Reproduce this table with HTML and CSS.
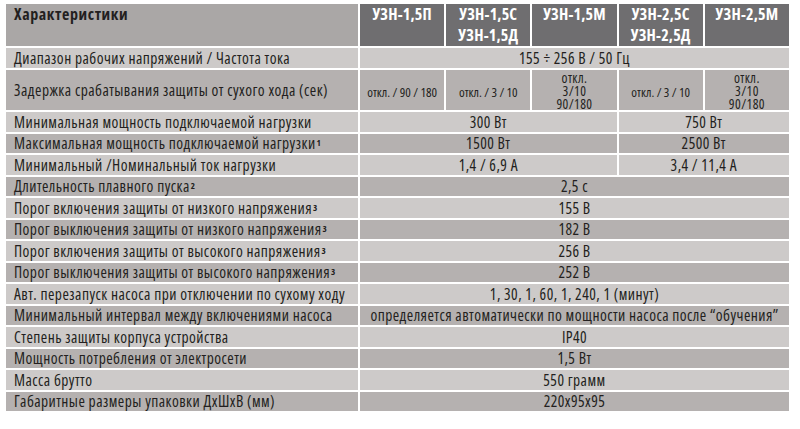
FILE: index.html
```html
<!DOCTYPE html>
<html lang="ru">
<head>
<meta charset="utf-8">
<title>Характеристики</title>
<link rel="stylesheet" href="styles.css">
</head>
<body>
<div class="spec">
  <div class="row">
    <div class="cell head-title">Характеристики</div>
    <div class="cell head">УЗН-1,5П</div>
    <div class="cell head">УЗН-1,5С<br>УЗН-1,5Д</div>
    <div class="cell head">УЗН-1,5М</div>
    <div class="cell head">УЗН-2,5С<br>УЗН-2,5Д</div>
    <div class="cell head">УЗН-2,5М</div>
  </div>
  <div class="row light">
    <div class="cell label">Диапазон рабочих напряжений / Частота тока</div>
    <div class="cell val all">155 ÷ 256 В / 50 Гц</div>
  </div>
  <div class="row dark tall">
    <div class="cell label">Задержка срабатывания защиты от сухого хода (сек)</div>
    <div class="cell val small">откл. / 90 / 180</div>
    <div class="cell val small">откл. / 3 / 10</div>
    <div class="cell val stack">откл.<br>3/10<br>90/180</div>
    <div class="cell val small">откл. / 3 / 10</div>
    <div class="cell val stack">откл.<br>3/10<br>90/180</div>
  </div>
  <div class="row light">
    <div class="cell label">Минимальная мощность подключаемой нагрузки</div>
    <div class="cell val three">300 Вт</div>
    <div class="cell val two">750 Вт</div>
  </div>
  <div class="row dark">
    <div class="cell label">Максимальная мощность подключаемой нагрузки<sup>1</sup></div>
    <div class="cell val three">1500 Вт</div>
    <div class="cell val two">2500 Вт</div>
  </div>
  <div class="row light">
    <div class="cell label">Минимальный /Номинальный ток нагрузки</div>
    <div class="cell val three">1,4 / 6,9 А</div>
    <div class="cell val two">3,4 / 11,4 А</div>
  </div>
  <div class="row dark">
    <div class="cell label">Длительность плавного пуска<sup>2</sup></div>
    <div class="cell val all">2,5 с</div>
  </div>
  <div class="row light">
    <div class="cell label">Порог включения защиты от низкого напряжения<sup>3</sup></div>
    <div class="cell val all">155 В</div>
  </div>
  <div class="row dark">
    <div class="cell label">Порог выключения защиты от низкого напряжения<sup>3</sup></div>
    <div class="cell val all">182 В</div>
  </div>
  <div class="row light">
    <div class="cell label">Порог включения защиты от высокого напряжения<sup>3</sup></div>
    <div class="cell val all">256 В</div>
  </div>
  <div class="row dark">
    <div class="cell label">Порог выключения защиты от высокого напряжения<sup>3</sup></div>
    <div class="cell val all">252 В</div>
  </div>
  <div class="row light">
    <div class="cell label">Авт. перезапуск насоса при отключении по сухому ходу</div>
    <div class="cell val all">1, 30, 1, 60, 1, 240, 1 (минут)</div>
  </div>
  <div class="row dark">
    <div class="cell label">Минимальный интервал между включениями насоса</div>
    <div class="cell val all">определяется автоматически по мощности насоса после “обучения”</div>
  </div>
  <div class="row light">
    <div class="cell label">Степень защиты корпуса устройства</div>
    <div class="cell val all">IP40</div>
  </div>
  <div class="row dark">
    <div class="cell label">Мощность потребления от электросети</div>
    <div class="cell val all">1,5 Вт</div>
  </div>
  <div class="row light">
    <div class="cell label">Масса брутто</div>
    <div class="cell val all">550 грамм</div>
  </div>
  <div class="row dark">
    <div class="cell label">Габаритные размеры упаковки ДхШхВ (мм)</div>
    <div class="cell val all">220x95x95</div>
  </div>
</div>
</body>
</html>
```

FILE: styles.css
```css
html, body {
  margin: 0;
  padding: 0;
  background: #ffffff;
}

body {
  padding: 4px 11px 0 6px;
  font-family: "Open Sans", "Noto Sans", sans-serif;
  font-stretch: 85%;
  color: #231f20;
}

.spec {
  display: grid;
  grid-template-columns: 352px repeat(5, 1fr);
  grid-template-rows: 42px 20px 40px;
  grid-auto-rows: 19.5px;
  gap: 2px;
  width: 783px;
}

.row {
  display: contents;
}

.cell {
  white-space: nowrap;
  font-size: 15.5px;
  letter-spacing: 0.45px;
  display: flex;
  align-items: center;
  overflow: visible;
}

.head-title {
  background: #aaa7a6;
  font-weight: 700;
  font-size: 16px;
  letter-spacing: 0.6px;
  align-items: flex-start;
  padding: 0 8px;
  line-height: 21px;
  color: #231f20;
}

.head {
  background: #6f6e70;
  color: #ffffff;
  font-weight: 700;
  font-size: 16px;
  letter-spacing: 0.2px;
  line-height: 21px;
  align-items: flex-start;
  justify-content: center;
  text-align: center;
}

.label {
  padding: 0 8px;
}

.val {
  justify-content: center;
  text-align: center;
}

.light .cell {
  background: #cdcac9;
}

.dark .cell {
  background: #b5b1b0;
}

.all {
  grid-column: span 5;
}

.three {
  grid-column: span 3;
}

.two {
  grid-column: span 2;
}

.small {
  font-size: 13px;
  letter-spacing: 0;
  padding-top: 3px;
}

.stack {
  font-size: 13.5px;
  letter-spacing: 0.4px;
  line-height: 13px;
  padding-top: 3px;
}

sup {
  font-size: 9px;
  font-weight: 700;
  letter-spacing: 0;
  line-height: 0;
  vertical-align: 6px;
  margin-left: 1px;
}
```
